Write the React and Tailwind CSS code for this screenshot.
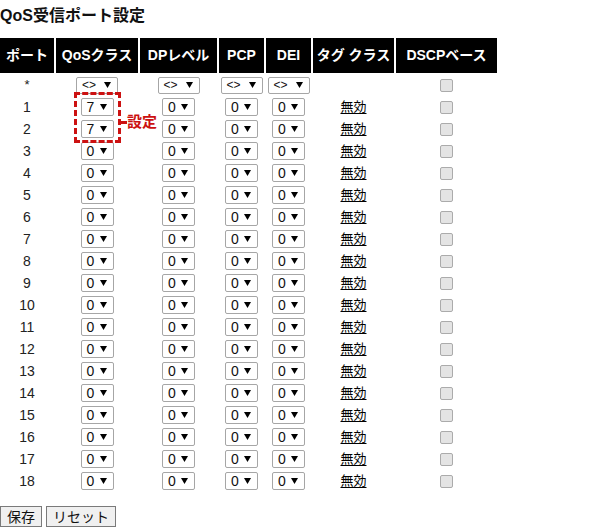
import React from 'react';

const cols = 'grid grid-cols-[54px_82px_77px_45px_45px_81px_101px] gap-x-[2px]';

const headers = ['ポート', 'QoSクラス', 'DPレベル', 'PCP', 'DEI', 'タグ クラス', 'DSCPベース'];

const ports = Array.from({ length: 18 }, (_, i) => ({
  id: i + 1,
  qos: i < 2 ? '7' : '0',
}));

function Arrow() {
  return (
    <svg width="7" height="6" viewBox="0 0 7 6" className="shrink-0">
      <polygon points="0,0 7,0 3.5,6" fill="#000" />
    </svg>
  );
}

function Sel({ value, wide }) {
  return (
    <div
      className={`flex items-center justify-between bg-white border border-[#a6a6a6] rounded-[2px] ${
        wide ? 'w-[42px] h-[17px] pl-[5px] pr-[6px]' : 'w-[33px] h-[18px] pl-[5px] pr-[6px]'
      }`}
    >
      <span className={`${wide ? 'text-[12px]' : 'text-[14px]'} leading-none text-[#111]`}>{value}</span>
      <Arrow />
    </div>
  );
}

function Check() {
  return <div className="w-[13px] h-[13px] rounded-[2px] border border-[#ababab] bg-[#e4e4e4]" />;
}

export default function App() {
  return (
    <div
      className="w-[600px] h-[532px] bg-white text-[#222] relative"
      style={{ fontFamily: '"Liberation Sans", "Noto Sans CJK JP", sans-serif' }}
    >
      <div className="h-[38px] pt-[6px]">
        <h1 className="text-[16px] leading-[20px] font-bold text-[#111]">QoS受信ポート設定</h1>
      </div>

      <div className={`${cols} h-[35px]`}>
        {headers.map((h) => (
          <div key={h} className="bg-black text-white font-bold text-[14px] flex items-center justify-center whitespace-nowrap">
            {h}
          </div>
        ))}
      </div>

      <div className={`${cols} h-[22px] mt-[1px] items-center`}>
        <div className="text-center text-[13px]">*</div>
        <div className="flex justify-center"><Sel value="<>" wide /></div>
        <div className="flex justify-center"><Sel value="<>" wide /></div>
        <div className="flex justify-center"><Sel value="<>" wide /></div>
        <div className="flex justify-center"><Sel value="<>" wide /></div>
        <div />
        <div className="flex justify-center"><Check /></div>
      </div>

      {ports.map((p) => (
        <div key={p.id} className={`${cols} h-[22px] items-center`}>
          <div className="text-center text-[14px]">{p.id}</div>
          <div className="flex justify-center"><Sel value={p.qos} /></div>
          <div className="flex justify-center"><Sel value="0" /></div>
          <div className="flex justify-center"><Sel value="0" /></div>
          <div className="flex justify-center"><Sel value="0" /></div>
          <div className="text-center text-[13px]"><span className="underline underline-offset-2 text-black">無効</span></div>
          <div className="flex justify-center"><Check /></div>
        </div>
      ))}

      {/* 設定 callout */}
      <div className="absolute left-[74px] top-[92px] w-[47px] h-[51px] border-[3px] border-dashed border-[#cc1111]" />
      <div className="absolute left-[121px] top-[121px] w-[6px] h-[3px] bg-[#cc1111]" />
      <div className="absolute left-[127px] top-[112px] text-[15px] leading-[20px] font-bold text-[#cc1111]">設定</div>

      <div className="flex gap-[4px] mt-[14px]">
        <button className="h-[21px] px-[6px] bg-[#f0f0f0] border border-[#7a7a7a] text-[14px] leading-none text-[#111]">保存</button>
        <button className="h-[21px] px-[6px] bg-[#f0f0f0] border border-[#7a7a7a] text-[14px] leading-none text-[#111]">リセット</button>
      </div>
    </div>
  );
}
